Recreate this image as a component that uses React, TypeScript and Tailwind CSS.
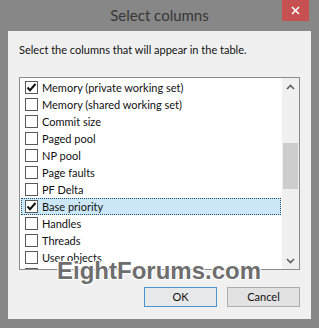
import React from "react";

const rows: { label: string; checked: boolean; selected?: boolean }[] = [
  { label: "Memory (private working set)", checked: true },
  { label: "Memory (shared working set)", checked: false },
  { label: "Commit size", checked: false },
  { label: "Paged pool", checked: false },
  { label: "NP pool", checked: false },
  { label: "Page faults", checked: false },
  { label: "PF Delta", checked: false },
  { label: "Base priority", checked: true, selected: true },
  { label: "Handles", checked: false },
  { label: "Threads", checked: false },
  { label: "User objects", checked: false },
  { label: "", checked: false },
];

function CheckBox({ checked }: { checked: boolean }) {
  return (
    <span className="flex h-[13px] w-[13px] shrink-0 items-center justify-center border border-[#5a5a5a] bg-white">
      {checked && (
        <svg width="11" height="11" viewBox="0 0 11 11">
          <path d="M1.5 5.5 L4 8.2 L9.5 2" fill="none" stroke="#111" strokeWidth="2" />
        </svg>
      )}
    </span>
  );
}

function Row({ label, checked, selected }: { label: string; checked: boolean; selected?: boolean }) {
  return (
    <div
      className={
        selected
          ? "flex h-[17px] shrink-0 items-center gap-[4px] border border-dotted border-[#1d4f72] bg-[#cce8f8] pl-[3px]"
          : "flex h-[17px] shrink-0 items-center gap-[4px] border border-transparent pl-[3px]"
      }
    >
      <CheckBox checked={checked} />
      {label && <span className="whitespace-nowrap text-[11px] leading-none text-[#111]">{label}</span>}
    </div>
  );
}

export default function App() {
  return (
    <div
      className="relative flex h-[328px] w-[319px] flex-col bg-[#878787]"
      style={{ fontFamily: 'Lato, "Noto Sans", sans-serif' }}
    >
      {/* Title bar */}
      <div className="relative flex h-[31px] shrink-0 items-center justify-center">
        <span className="text-[15px] text-[#363636]">Select columns</span>
        <button className="absolute right-[10px] top-0 flex h-[21px] w-[27px] items-center justify-center bg-[#c75050]">
          <svg width="9" height="9" viewBox="0 0 9 9">
            <path d="M1 1 L8 8 M8 1 L1 8" stroke="#fff" strokeWidth="1.6" />
          </svg>
        </button>
      </div>

      {/* Client area */}
      <div className="mx-[8px] flex h-[288px] flex-col bg-[#f0f0f0] px-[11px] pt-[11px]">
        <p className="h-[16px] text-[11px] leading-[16px] text-[#111]">
          Select the columns that will appear in the table.
        </p>

        {/* List box */}
        <div className="mt-[19px] flex h-[193px] border border-[#8b8b8b] bg-white">
          <div className="flex flex-1 flex-col overflow-hidden p-[1px]">
            {rows.map((r, i) => (
              <Row key={i} {...r} />
            ))}
          </div>
          <div className="flex w-[17px] shrink-0 flex-col bg-[#f0f0f0]">
            <div className="flex h-[17px] items-center justify-center">
              <svg width="9" height="6" viewBox="0 0 9 6">
                <path d="M1 5 L4.5 1.5 L8 5" fill="none" stroke="#606060" strokeWidth="1.6" />
              </svg>
            </div>
            <div className="mt-[48px] ml-[1px] h-[46px] w-[15px] bg-[#cdcdcd]" />
            <div className="flex-1" />
            <div className="flex h-[17px] items-center justify-center">
              <svg width="9" height="6" viewBox="0 0 9 6">
                <path d="M1 1 L4.5 4.5 L8 1" fill="none" stroke="#606060" strokeWidth="1.6" />
              </svg>
            </div>
          </div>
        </div>

        {/* Buttons */}
        <div className="mt-[17px] flex justify-end gap-[10px]">
          <button className="h-[20px] w-[73px] border border-[#4a94d4] bg-[#e6e8ea] text-[11px] text-[#111]">
            OK
          </button>
          <button className="h-[20px] w-[73px] border border-[#adadad] bg-[#e2e2e2] text-[11px] text-[#111]">
            Cancel
          </button>
        </div>
      </div>

      {/* Watermark */}
      <span
        className="pointer-events-none absolute left-[57px] top-[259px] whitespace-nowrap text-[24px] font-bold leading-none text-[#6e6e6e]"
        style={{ fontFamily: '"Liberation Sans", sans-serif', textShadow: "1px 1px 0 #fff, -1px -1px 0 #fff, 1px -1px 0 #fff, -1px 1px 0 #fff" }}
      >
        EightForums.com
      </span>
    </div>
  );
}
